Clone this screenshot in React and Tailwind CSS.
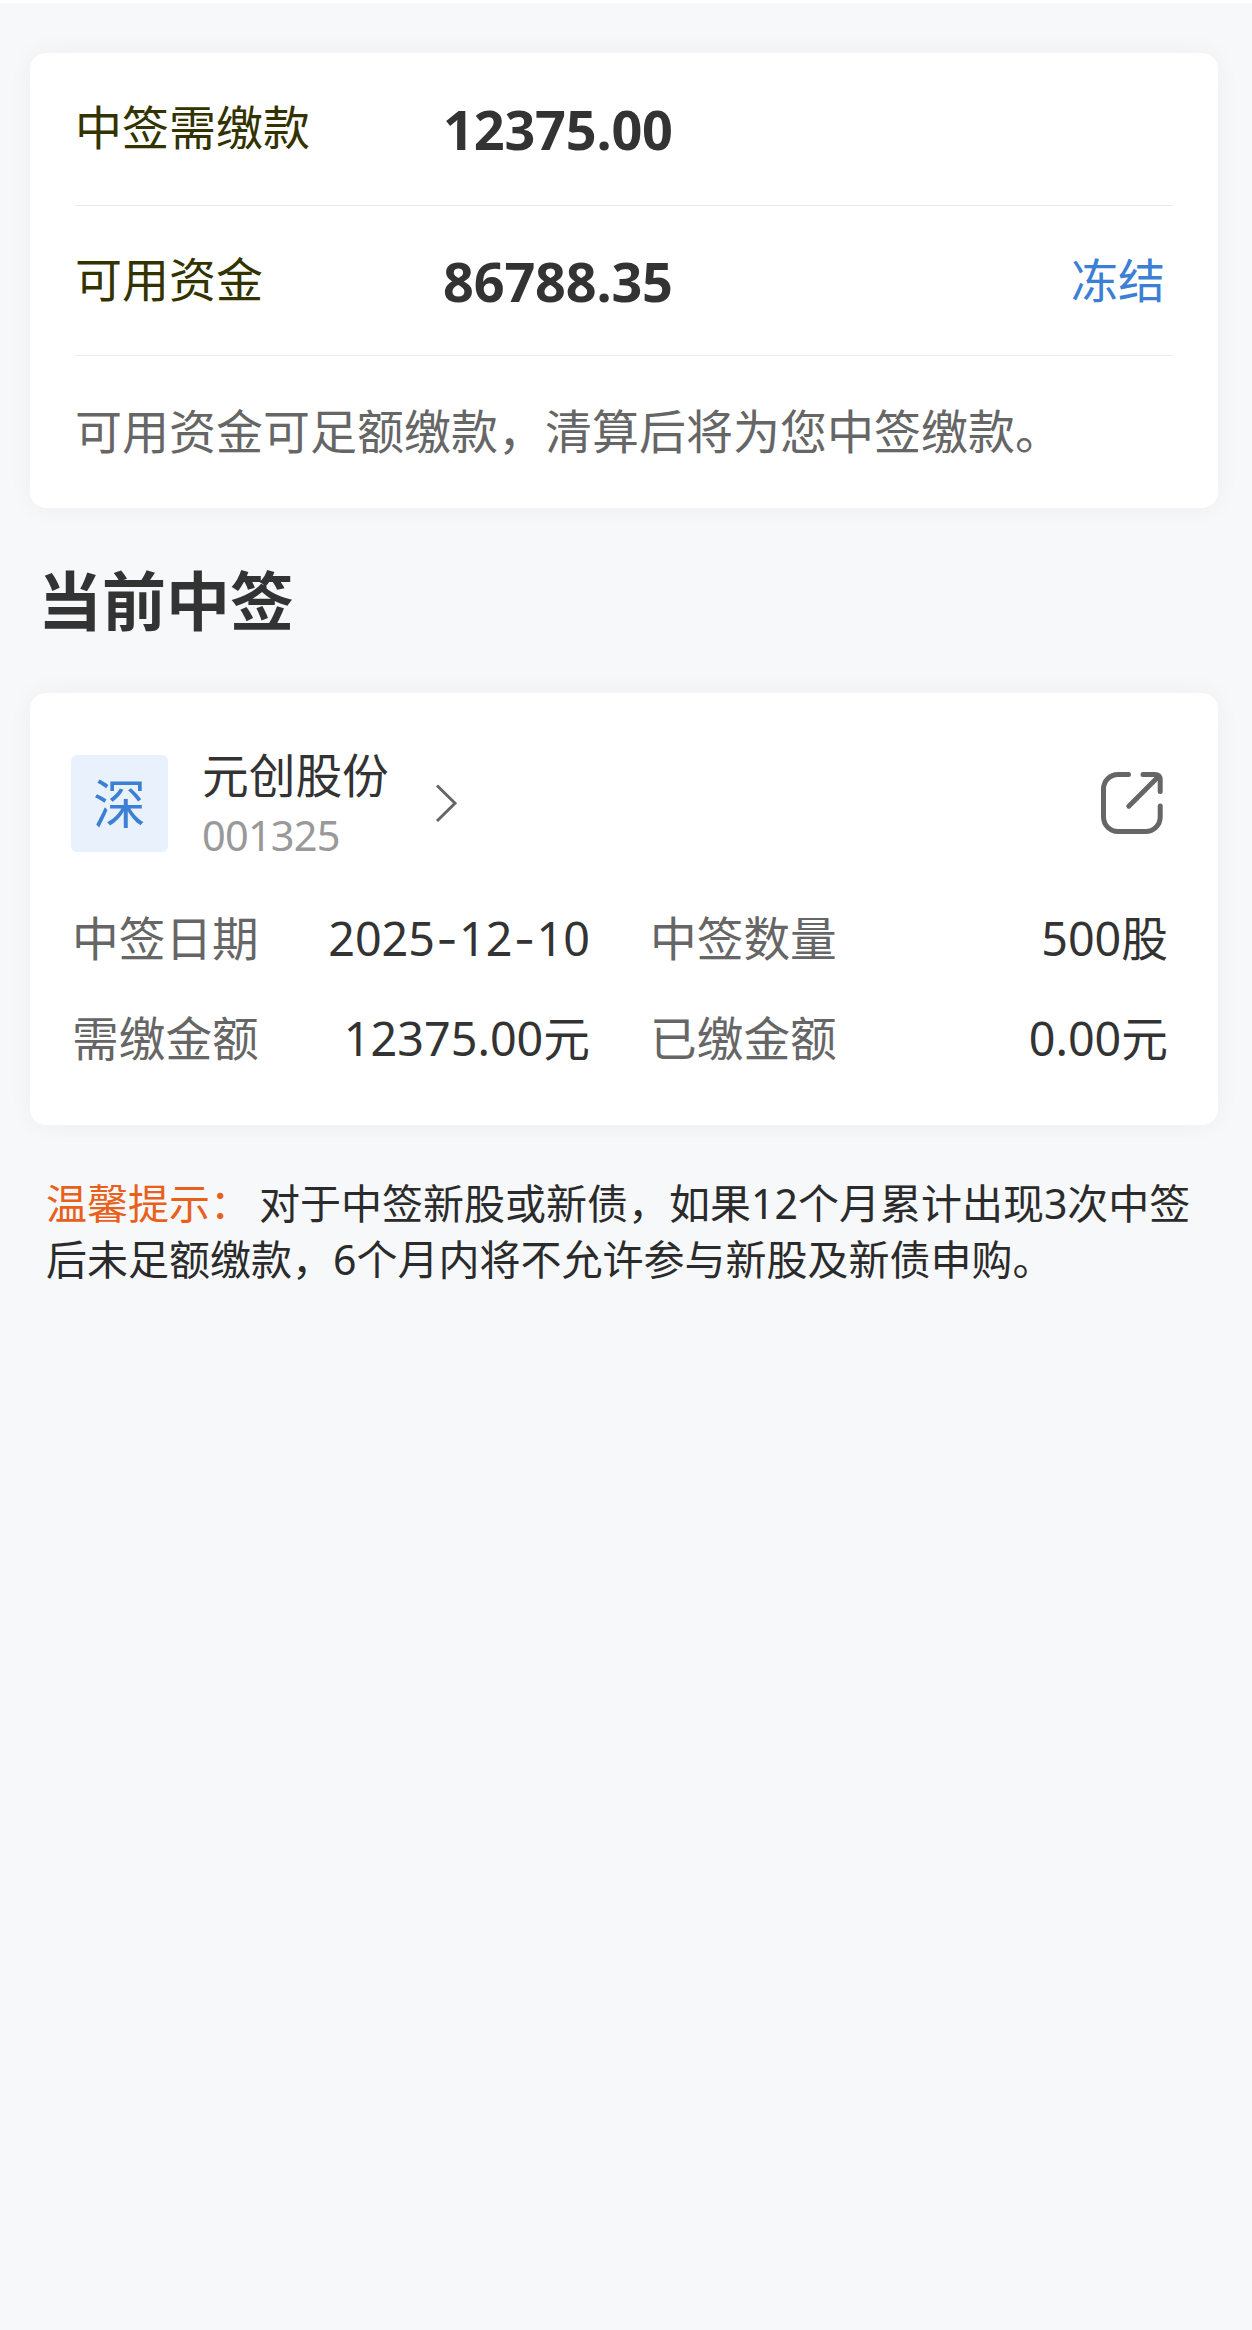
const card =
  "mx-auto w-[1188px] rounded-[16px] bg-white shadow-[0_0_26px_rgba(0,0,0,0.045)]";

function SummaryRow({ label, amount, action }) {
  return (
    <div className="flex h-[150px] border-b border-[#ececec] pt-[43px] text-[47px] leading-[60px] first:h-[153px] first:pt-[44px]">
      <div className="w-[368px] text-[#333300]">{label}</div>
      <div className="flex-1 pt-[2px] text-[54px] font-bold tracking-[-0.2px] text-[#333333]">{amount}</div>
      {action && <button className="mt-px mr-[8px] h-[60px] text-[#3b80d4]">{action}</button>}
    </div>
  );
}

function Detail({ label, children }) {
  return (
    <div className="flex justify-between text-[46.7px] leading-[60px]">
      <span className="text-[#666666]">{label}</span>
      <span className="text-[#333333]">{children}</span>
    </div>
  );
}

function Dash() {
  return <span className="mx-[1.3px] font-['Inter']">-</span>;
}

function ShareIcon() {
  return (
    <svg width="64" height="64" viewBox="0 0 64 64" fill="none" stroke="#666666" strokeWidth="5" strokeLinecap="round">
      <path d="M28.5 3.5H18A14.5 14.5 0 0 0 3.5 18V46A14.5 14.5 0 0 0 18 60.5H45.7A14.5 14.5 0 0 0 60.2 46V35" />
      <path d="M43 3.5H54.5Q60.2 3.5 60.2 9V20.5M28.8 35.2L58 6" />
    </svg>
  );
}

export default function App() {
  return (
    <main className="h-[2330px] w-[1252px] border-t-[3px] border-white bg-[#f6f8fa] pt-[50px] pr-[34px] pl-[30px] font-['Noto_Sans','Noto_Sans_CJK_SC',sans-serif] whitespace-nowrap">
      <section className={card + " h-[455px] px-[45px]"}>
        <div>
          <SummaryRow label="中签需缴款" amount="12375.00" />
          <SummaryRow label="可用资金" amount="86788.35" action="冻结" />
        </div>
        <p className="pt-[45px] text-[47px] leading-[60px] text-[#666666]">
          可用资金可足额缴款，清算后将为您中签缴款。
        </p>
      </section>

      <h1 className="ml-[8px] flex h-[185px] items-center text-[64px] font-bold text-[#333333]">当前中签</h1>

      <section className={card + " h-[432px] pt-[62px] pr-[50px] pl-[41px]"}>
        <div className="flex">
          <div className="flex size-[97px] items-center justify-center rounded-[6px] bg-[#e9f2fc] text-[53px] leading-[60px] text-[#3b80d4]">
            深
          </div>
          <div className="ml-[34px]">
            <div className="-mt-[10px] text-[46.7px] leading-[60px] text-[#333333]">元创股份</div>
            <div className="text-[41.5px] leading-[60px] tracking-[-0.8px] text-[#999999]">001325</div>
          </div>
          <svg className="mt-[28px] ml-[44px]" width="28" height="40" viewBox="0 0 28 40" fill="none" stroke="#666666" strokeWidth="3">
            <path d="M4 2.5L22 20.3L4 38" />
          </svg>
          <div className="mt-[16px] mr-[4px] ml-auto">
            <ShareIcon />
          </div>
        </div>
        <div className="mt-[43px] ml-[1px] grid grid-cols-[518px_518px] gap-x-[60px] gap-y-[39px]">
          <Detail label="中签日期">
            2025<Dash />12<Dash />10
          </Detail>
          <Detail label="中签数量">500股</Detail>
          <Detail label="需缴金额">12375.00元</Detail>
          <Detail label="已缴金额">0.00元</Detail>
        </div>
      </section>

      <p className="mt-[50px] ml-[16px] text-[41px] leading-[56px] text-[#2b2b2b]">
        <span className="mr-[8px] text-[#e8601c]">温馨提示：</span>
        对于中签新股或新债，如果12个月累计出现3次中签
        <br />
        后未足额缴款，6个月内将不允许参与新股及新债申购。
      </p>
    </main>
  );
}
